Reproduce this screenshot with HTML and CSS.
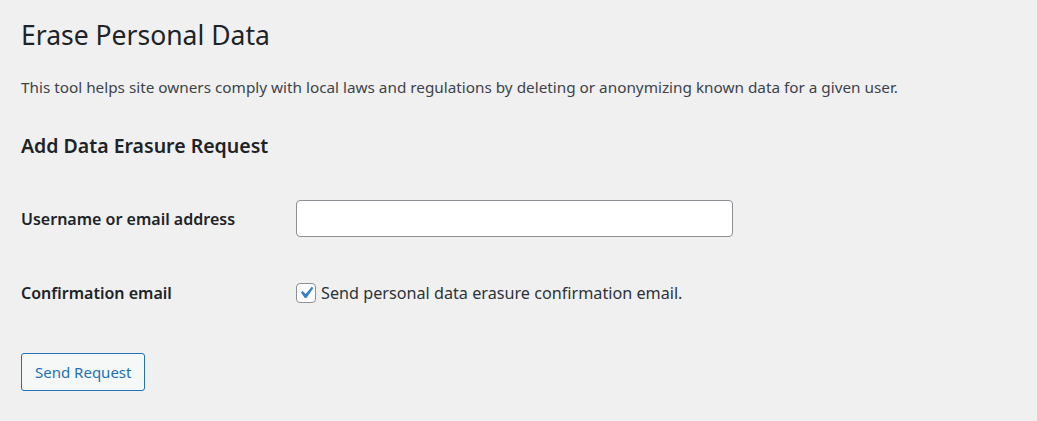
FILE: index.html
```html
<!DOCTYPE html>
<html>
<head>
<meta charset="utf-8">
<link rel="stylesheet" href="styles.css">
</head>
<body>
<div class="wrap">
  <h1 class="title">Erase Personal Data</h1>
  <p class="intro">This tool helps site owners comply with local laws and regulations by deleting or anonymizing known data for a given user.</p>
  <h2 class="subtitle">Add Data Erasure Request</h2>
  <form class="form">
    <div class="row row-user">
      <label class="label" for="user">Username or email address</label>
      <div class="field"><input id="user" class="text-input" type="text"></div>
    </div>
    <div class="row row-confirm">
      <span class="label">Confirmation email</span>
      <label class="field check-field">
        <span class="checkbox">
          <svg viewBox="0 0 20 20" width="20" height="20"><path d="M14.83 4.89l1.34.94-5.81 8.38H9.02L5.78 9.67l1.34-1.25 2.57 2.4z" fill="#3582c4"/></svg>
        </span>
        <span class="check-text">Send personal data erasure confirmation email.</span>
      </label>
    </div>
    <div class="actions">
      <button type="button" class="button">Send Request</button>
    </div>
  </form>
</div>
</body>
</html>
```

FILE: styles.css
```css
html, body {
  margin: 0;
  padding: 0;
  background: #f0f0f1;
}
body {
  font-family: "Noto Sans", "Open Sans", sans-serif;
  color: #1d2327;
  font-size: 13px;
}
.wrap {
  padding: 17px 21px 0 21px;
}
.title {
  margin: 0;
  font-size: 26.5px;
  font-weight: 400;
  line-height: 37px;
  color: #1d2327;
}
.intro {
  margin: 23px 0 0;
  font-size: 15.3px;
  line-height: 20px;
  color: #3c434a;
}
.subtitle {
  margin: 36px 0 0;
  font-size: 19.5px;
  font-weight: 600;
  line-height: 26px;
}
.form {
  margin-top: 41px;
}
.row {
  display: grid;
  grid-template-columns: 275px 1fr;
  align-items: center;
}
.label {
  font-size: 16px;
  font-weight: 600;
  color: #1d2327;
}
.row-user {
  height: 37px;
}
.row-confirm {
  margin-top: 45px;
  height: 22px;
}
.text-input {
  box-sizing: border-box;
  width: 437px;
  height: 37px;
  border: 1px solid #8c8f94;
  border-radius: 4px;
  background: #fff;
  margin: 0;
  padding: 0 8px;
  display: block;
}
.check-field {
  display: flex;
  align-items: center;
  gap: 5px;
}
.checkbox {
  box-sizing: border-box;
  width: 20px;
  height: 20px;
  border: 1px solid #8c8f94;
  border-radius: 4px;
  background: #fff;
  display: flex;
  align-items: center;
  justify-content: center;
}
.checkbox svg {
  width: 24px;
  height: 24px;
  flex: none;
}
.check-text {
  font-size: 16.2px;
  color: #2c3338;
}
.actions {
  margin-top: 49px;
}
.button {
  box-sizing: border-box;
  height: 38px;
  padding: 0 13px;
  font-family: inherit;
  font-size: 15px;
  color: #2271b1;
  background: #f6f7f7;
  border: 1px solid #2271b1;
  border-radius: 3px;
  cursor: pointer;
}
```
